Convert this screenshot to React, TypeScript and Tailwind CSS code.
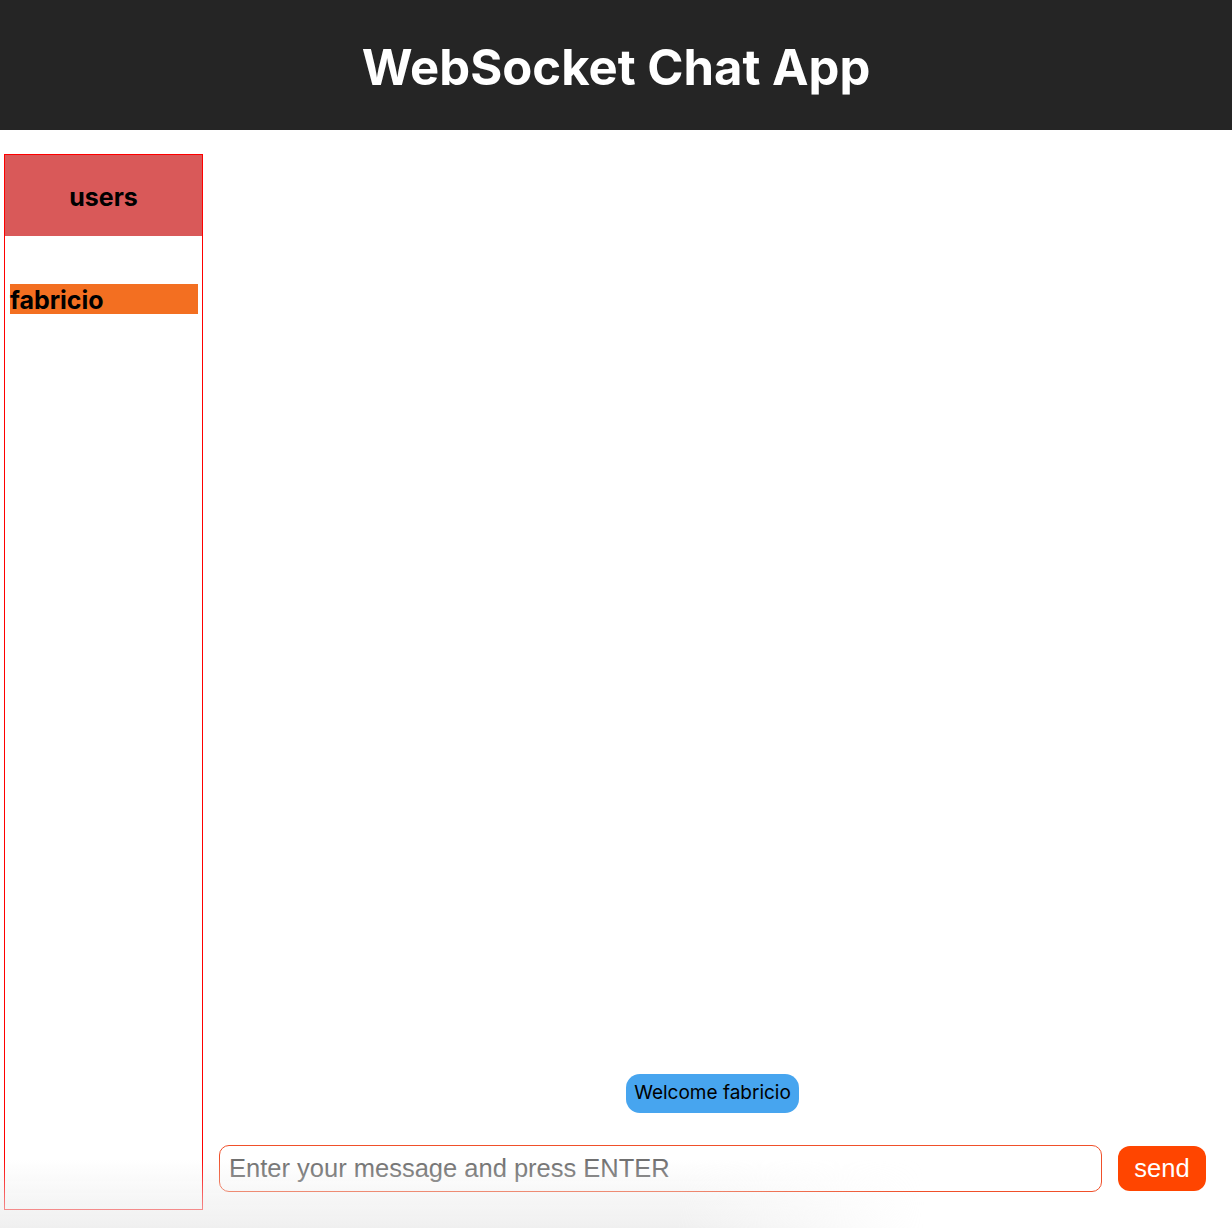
import { useState } from "react";

const App = () => {
    const [message, setMessage] = useState("");
    const users = ["fabricio"];

    return (
        <div className="relative min-h-[1228px] flex flex-col bg-white font-['Inter',sans-serif]">
            {/* Header */}
            <header className="h-[130px] bg-[#252525] flex items-center justify-center pt-1">
                <h1 className="text-[49px] leading-none font-bold text-white">WebSocket Chat App</h1>
            </header>

            <main className="flex-1 flex gap-4 pt-6 pb-[18px] pl-1 pr-[26px]">
                {/* Users sidebar */}
                <aside className="w-[199px] shrink-0 border border-[#ff0000] flex flex-col">
                    <div className="h-[81px] bg-[#d95959] flex items-center justify-center pt-1">
                        <h2 className="text-[25px] font-bold text-black">users</h2>
                    </div>
                    <ul className="pt-12 pl-[5px] pr-1">
                        {users.map((u) => (
                            <li
                                key={u}
                                className="h-[30px] bg-[#f36f21] text-[25px] font-bold text-black leading-[32px]"
                            >
                                {u}
                            </li>
                        ))}
                    </ul>
                </aside>

                {/* Chat */}
                <section className="flex-1 flex flex-col pb-[18px]">
                    <div className="flex-1 flex flex-col justify-end items-center pb-8">
                        <div className="h-[39px] px-2 rounded-[14px] bg-[#47a5ef] flex items-center text-[19px] text-black">
                            Welcome fabricio
                        </div>
                    </div>
                    <form
                        className="flex items-center gap-4"
                        onSubmit={(e) => {
                            e.preventDefault();
                            setMessage("");
                        }}
                    >
                        <input
                            type="text"
                            value={message}
                            onChange={(e) => setMessage(e.target.value)}
                            placeholder="Enter your message and press ENTER"
                            className="flex-1 h-[47px] px-[9px] border border-[#f0502a] rounded-[10px] outline-none font-['Liberation_Sans',Arial,sans-serif] text-[25.5px] text-[#333] placeholder:text-[#6e6e6e]"
                        />
                        <button
                            type="submit"
                            className="w-[88px] h-[45px] rounded-[12px] bg-[#ff4500] text-white text-[25.5px] font-['Liberation_Sans',Arial,sans-serif]"
                        >
                            send
                        </button>
                    </form>
                </section>
            </main>

            {/* Bottom shade from the capture */}
            <div className="pointer-events-none absolute bottom-0 left-0 right-0 h-[70px] bg-gradient-to-b from-transparent to-[#ececec]/80 [mask-image:linear-gradient(to_right,black_55%,transparent_75%)]" />
        </div>
    );
};

export default App;
